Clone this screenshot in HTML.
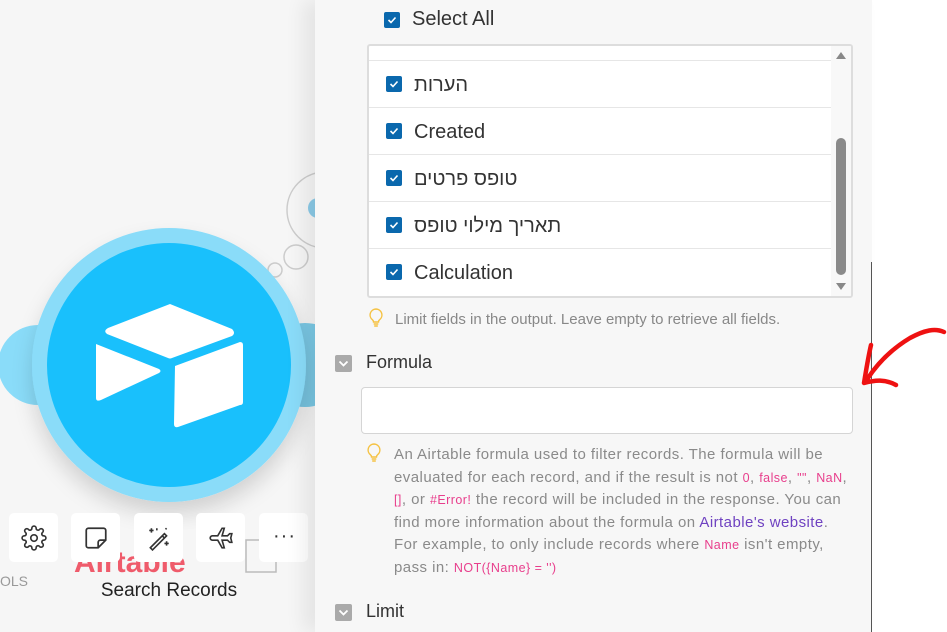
<!DOCTYPE html>
<html><head><meta charset="utf-8"><style>
*{box-sizing:border-box;margin:0;padding:0}
body{width:947px;height:632px;overflow:hidden;position:relative;background:#fff;font-family:"Liberation Sans","Noto Sans CJK SC",sans-serif;}
.canvas{position:absolute;left:0;top:0;width:316px;height:632px;background:#f6f6f6}
.panel{position:absolute;left:315px;top:0;width:557px;height:632px;background:#f7f7f7;box-shadow:-12px 0 18px rgba(0,0,0,.07)}
.vline{position:absolute;left:871px;top:262px;width:1px;height:370px;background:#555}
.cb{position:absolute;width:16px;height:16px;background:#0a68ad;border-radius:2px}
.cb svg{position:absolute;left:3px;top:3px}
.list{position:absolute;left:367px;top:44px;width:486px;height:254px;background:#fff;border:2px solid #ddd;border-radius:3px;overflow:hidden}
.row{position:absolute;left:0;width:462px;height:47px;border-bottom:1px solid #e6e6e6}
.row span{position:absolute;left:45px;top:13px;font-size:20px;color:#333}
.row .cb{left:17px;top:15px}
.hint{position:absolute;color:#888;font-size:15px}
.sec{position:absolute;left:335px;width:17px;height:17px;background:#aaa;border-radius:2px}
.sectitle{position:absolute;left:366px;font-size:18px;color:#333}
.help{position:absolute;left:394px;top:444px;width:480px;font-size:15px;line-height:22.6px;color:#8a8a8a;white-space:nowrap;letter-spacing:.45px}
.p{color:#e83e8c;font-size:12.5px}
.a{color:#6f42c1}
.btn{position:absolute;top:513px;width:49px;height:49px;background:#fff;border-radius:5px}
.btn svg{position:absolute;left:12px;top:12px}
</style></head><body>
<div class="canvas">
  <svg width="316" height="632" style="position:absolute;left:0;top:0">
    <circle cx="325" cy="210" r="38" fill="none" stroke="#ccc" stroke-width="1.5"/>
    <circle cx="318" cy="208" r="10" fill="#8ccbe8"/>
    <circle cx="296" cy="257" r="12" fill="#f6f6f6" stroke="#ccc" stroke-width="1.5"/>
    <circle cx="275" cy="270" r="7" fill="#f6f6f6" stroke="#ccc" stroke-width="1.5"/>
    <circle cx="38" cy="365" r="40" fill="#8adcf9"/>
    <circle cx="305" cy="365" r="42" fill="#7ccbe8"/>
    <defs><filter id="sh"><feDropShadow dx="0" dy="12" stdDeviation="10" flood-opacity=".15"/></filter></defs>
    <text x="74" y="572" font-family="Liberation Sans" font-weight="bold" font-size="30" fill="#ef5b6b">Airtable</text>
    <rect x="246" y="540" width="30" height="32" fill="none" stroke="#bbb" stroke-width="1.5"/>
    <circle cx="169" cy="365" r="137" fill="#8adcf9" filter="url(#sh)"/>
    <circle cx="169" cy="365" r="122" fill="#19c0fc"/>
    <path d="M170 304 L232 329 Q236 333 232 336 L172 358 Q170 359 168 358 L107 334 Q103 331 108 328 Z" fill="#fff"/>
    <path d="M96 344 L159 369 Q162 371 159 373 L101 400 Q96 402 96 398 Z" fill="#fff"/>
    <path d="M175 366 L240 342 Q243 342 243 345 L243 402 Q243 405 240 405 L178 427 Q174 428 174 424 Z" fill="#fff"/>
  </svg>
  <div class="btn" style="left:9px"><svg width="26" height="26" viewBox="0 0 24 24" fill="none" stroke="#333" stroke-width="1.5"><circle cx="12" cy="12" r="3"/><path d="M19.4 15a1.7 1.7 0 0 0 .3 1.8l.1.1a2 2 0 1 1-2.8 2.8l-.1-.1a1.7 1.7 0 0 0-2.9 1.2V21a2 2 0 1 1-4 0v-.1a1.7 1.7 0 0 0-2.9-1.2l-.1.1a2 2 0 1 1-2.8-2.8l.1-.1A1.7 1.7 0 0 0 3 14H3a2 2 0 1 1 0-4h.1a1.7 1.7 0 0 0 1.2-2.9l-.1-.1a2 2 0 1 1 2.8-2.8l.1.1A1.7 1.7 0 0 0 10 3V3a2 2 0 1 1 4 0v.1a1.7 1.7 0 0 0 2.9 1.2l.1-.1a2 2 0 1 1 2.8 2.8l-.1.1A1.7 1.7 0 0 0 21 10h0a2 2 0 1 1 0 4h-.1a1.7 1.7 0 0 0-1.5 1z"/></svg></div>
  <div class="btn" style="left:71px"><svg width="26" height="26" viewBox="0 0 24 24" fill="none" stroke="#333" stroke-width="1.6"><path d="M5 3h14a2 2 0 0 1 2 2v9l-7 7H5a2 2 0 0 1-2-2V5a2 2 0 0 1 2-2z M21 14h-5a2 2 0 0 0-2 2v5"/></svg></div>
  <div class="btn" style="left:134px"><svg width="26" height="26" viewBox="0 0 24 24" fill="none" stroke="#333" stroke-width="1.5"><path d="M4 21L17 8l2 2L6 23zM15 10l2 2M3 5h4M5 3v4M17 17h4M19 15v4M10 3v2M18 4l1-1"/></svg></div>
  <div class="btn" style="left:196px"><svg width="26" height="26" viewBox="0 0 24 24" fill="none" stroke="#333" stroke-width="1.5"><path d="M2 12c0-1 1-2 2-2h5l4-7h2l-2 7h5l2-2h2l-1 4 1 4h-2l-2-2h-5l2 7h-2l-4-7H4c-1 0-2-1-2-2z"/></svg></div>
  <div class="btn" style="left:259px"><span style="position:absolute;left:14px;top:12px;font-size:20px;color:#333;letter-spacing:1px">···</span></div>
  <div style="position:absolute;left:0;top:573px;font-size:14px;color:#999">OLS</div>
  <div style="position:absolute;left:0;width:338px;top:580px;text-align:center;font-size:19px;color:#222">Search Records</div>
</div>
<div class="panel"></div>
<div class="vline"></div>

<div class="cb" style="left:384px;top:12px"><svg width="10" height="10" viewBox="0 0 10 10"><path d="M1.5 5l2.5 2.5L8.5 2.5" stroke="#fff" stroke-width="1.6" fill="none"/></svg></div>
<div style="position:absolute;left:412px;top:8px;font-size:20px;color:#333">Select All</div>

<div class="list">
  <div class="row" style="top:-32px"><div class="cb"></div></div>
  <div class="row" style="top:15px"><div class="cb"><svg width="10" height="10" viewBox="0 0 10 10"><path d="M1.5 5l2.5 2.5L8.5 2.5" stroke="#fff" stroke-width="1.6" fill="none"/></svg></div><span>הערות</span></div>
  <div class="row" style="top:62px"><div class="cb"><svg width="10" height="10" viewBox="0 0 10 10"><path d="M1.5 5l2.5 2.5L8.5 2.5" stroke="#fff" stroke-width="1.6" fill="none"/></svg></div><span>Created</span></div>
  <div class="row" style="top:109px"><div class="cb"><svg width="10" height="10" viewBox="0 0 10 10"><path d="M1.5 5l2.5 2.5L8.5 2.5" stroke="#fff" stroke-width="1.6" fill="none"/></svg></div><span>טופס פרטים</span></div>
  <div class="row" style="top:156px"><div class="cb"><svg width="10" height="10" viewBox="0 0 10 10"><path d="M1.5 5l2.5 2.5L8.5 2.5" stroke="#fff" stroke-width="1.6" fill="none"/></svg></div><span>תאריך מילוי טופס</span></div>
  <div class="row" style="top:203px;border:none"><div class="cb"><svg width="10" height="10" viewBox="0 0 10 10"><path d="M1.5 5l2.5 2.5L8.5 2.5" stroke="#fff" stroke-width="1.6" fill="none"/></svg></div><span>Calculation</span></div>
  <div style="position:absolute;left:462px;top:0;width:20px;height:252px;background:#f8f8f8"></div>
  <svg style="position:absolute;left:466px;top:4px" width="12" height="10"><path d="M1 9L6 2L11 9Z" fill="#888"/></svg>
  <div style="position:absolute;left:467px;top:92px;width:10px;height:137px;background:#8a8a8a;border-radius:5px"></div>
  <svg style="position:absolute;left:466px;top:236px" width="12" height="10"><path d="M1 1L6 8L11 1Z" fill="#888"/></svg>
</div>

<svg style="position:absolute;left:369px;top:308px" width="14" height="20" viewBox="0 0 14 20" fill="none" stroke="#f5c242" stroke-width="1.4"><path d="M7 1a6 6 0 0 0-3.5 10.8c.6.5 1 1.3 1 2.2h5c0-.9.4-1.7 1-2.2A6 6 0 0 0 7 1zM4.7 16h4.6M5.2 18h3.6"/></svg>
<div class="hint" style="left:395px;top:311px">Limit fields in the output. Leave empty to retrieve all fields.</div>

<div class="sec" style="top:355px"><svg width="17" height="17"><path d="M4.5 6.5L8.5 10.5L12.5 6.5" stroke="#fff" stroke-width="1.8" fill="none"/></svg></div>
<div class="sectitle" style="top:352px">Formula</div>
<div style="position:absolute;left:361px;top:387px;width:492px;height:47px;background:#fff;border:1px solid #d5d5d5;border-radius:4px"></div>

<svg style="position:absolute;left:367px;top:443px" width="14" height="20" viewBox="0 0 14 20" fill="none" stroke="#f5c242" stroke-width="1.4"><path d="M7 1a6 6 0 0 0-3.5 10.8c.6.5 1 1.3 1 2.2h5c0-.9.4-1.7 1-2.2A6 6 0 0 0 7 1zM4.7 16h4.6M5.2 18h3.6"/></svg>
<div class="help">An Airtable formula used to filter records. The formula will be<br>evaluated for each record, and if the result is not <span class="p">0</span>, <span class="p">false</span>, <span class="p">""</span>, <span class="p">NaN</span>,<br><span class="p">[]</span>, or <span class="p">#Error!</span> the record will be included in the response. You can<br>find more information about the formula on <span class="a">Airtable's website</span>.<br>For example, to only include records where <span class="p">Name</span> isn't empty,<br>pass in: <span class="p">NOT({Name} = '')</span></div>

<div class="sec" style="top:604px"><svg width="17" height="17"><path d="M4.5 6.5L8.5 10.5L12.5 6.5" stroke="#fff" stroke-width="1.8" fill="none"/></svg></div>
<div class="sectitle" style="top:601px">Limit</div>

<svg style="position:absolute;left:855px;top:325px" width="92" height="70"><path d="M89 7C80 3 70 5 55 13 C40 22 25 35 13 53 M16 20 C13 33 11 46 9 58 C20 55 30 54 41 60" stroke="#e11" stroke-width="4.5" fill="none" stroke-linecap="round" stroke-linejoin="round"/></svg>
</body></html>
